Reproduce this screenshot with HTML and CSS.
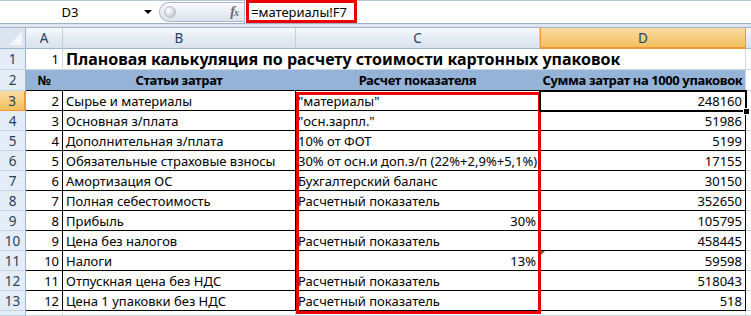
FILE: index.html
```html
<!DOCTYPE html>
<html lang="ru">
<head>
<meta charset="utf-8">
<title>Плановая калькуляция</title>
<link rel="stylesheet" href="styles.css">
</head>
<body>
<div class="app">
  <div class="fbar">
    <div class="namebox"><span class="nb-text">D3</span><span class="nb-arrow"></span></div>
    <div class="fx-zone">
      <div class="pill"><span class="knob"></span><span class="fx">f<span class="fx-x">x</span></span></div>
    </div>
    <div class="finput"><span class="ftext">=материалы!F7</span></div>
  </div>
  <div class="strip"></div>
  <div class="sheet">
    <div class="corner"><span class="corner-tri"></span></div>
    <div class="ch">A</div>
    <div class="ch">B</div>
    <div class="ch">C</div>
    <div class="ch ch-sel">D</div>
    <div class="ch ch-e"></div>

    <div class="rh">1</div>
    <div class="c num">1</div>
    <div class="c title span3">Плановая калькуляция по расчету стоимости картонных упаковок</div>
    <div class="c e"></div>

    <div class="rh">2</div>
    <div class="c hd">№</div>
    <div class="c hd">Статьи затрат</div>
    <div class="c hd">Расчет показателя</div>
    <div class="c hd hd-last">Сумма затрат на 1000 упаковок</div>
    <div class="c e"></div>

    <div class="rh rh-sel">3</div>
    <div class="c t num">2</div>
    <div class="c t">Сырье и материалы</div>
    <div class="c t cc">"материалы"</div>
    <div class="c t num">248160</div>
    <div class="c e"></div>

    <div class="rh">4</div>
    <div class="c t num">3</div>
    <div class="c t">Основная з/плата</div>
    <div class="c t cc">"осн.зарпл."</div>
    <div class="c t num">51986</div>
    <div class="c e"></div>

    <div class="rh">5</div>
    <div class="c t num">4</div>
    <div class="c t">Дополнительная з/плата</div>
    <div class="c t cc">10% от ФОТ</div>
    <div class="c t num">5199</div>
    <div class="c e"></div>

    <div class="rh">6</div>
    <div class="c t num">5</div>
    <div class="c t">Обязательные страховые взносы</div>
    <div class="c t cc">30% от осн.и доп.з/п (22%+2,9%+5,1%)</div>
    <div class="c t num">17155</div>
    <div class="c e"></div>

    <div class="rh">7</div>
    <div class="c t num">6</div>
    <div class="c t">Амортизация ОС</div>
    <div class="c t cc">Бухгалтерский баланс</div>
    <div class="c t num">30150</div>
    <div class="c e"></div>

    <div class="rh">8</div>
    <div class="c t num">7</div>
    <div class="c t">Полная себестоимость</div>
    <div class="c t cc">Расчетный показатель</div>
    <div class="c t num">352650</div>
    <div class="c e"></div>

    <div class="rh">9</div>
    <div class="c t num">8</div>
    <div class="c t">Прибыль</div>
    <div class="c t num">30%</div>
    <div class="c t num">105795</div>
    <div class="c e"></div>

    <div class="rh">10</div>
    <div class="c t num">9</div>
    <div class="c t">Цена без налогов</div>
    <div class="c t cc">Расчетный показатель</div>
    <div class="c t num">458445</div>
    <div class="c e"></div>

    <div class="rh">11</div>
    <div class="c t num">10</div>
    <div class="c t">Налоги</div>
    <div class="c t num">13%</div>
    <div class="c t num flag">59598</div>
    <div class="c e"></div>

    <div class="rh">12</div>
    <div class="c t num">11</div>
    <div class="c t">Отпускная цена без НДС</div>
    <div class="c t cc">Расчетный показатель</div>
    <div class="c t num">518043</div>
    <div class="c e"></div>

    <div class="rh">13</div>
    <div class="c t num">12</div>
    <div class="c t">Цена 1 упаковки без НДС</div>
    <div class="c t cc">Расчетный показатель</div>
    <div class="c t num">518</div>
    <div class="c e"></div>

    <div class="rh"></div>
    <div class="c"></div>
    <div class="c"></div>
    <div class="c"></div>
    <div class="c"></div>
    <div class="c e"></div>

    <div class="hl-box"></div>
    <div class="sel-box"><span class="handle"></span></div>
  </div>
</div>
</body>
</html>
```

FILE: styles.css
```css
* { box-sizing: border-box; }
html, body { margin: 0; padding: 0; background: #ffffff; }
body {
  font-family: "Noto Sans", "Open Sans", sans-serif;
  font-size: 13px;
  color: #000;
  width: 751px;
  height: 316px;
  overflow: hidden;
}
.app { width: 751px; height: 316px; display: flex; flex-direction: column; overflow: hidden; }

/* formula bar */
.fbar {
  height: 24px;
  display: flex;
  border-top: 1px solid #b6c5d8;
  border-bottom: 1px solid #9fb1c8;
  background: #ffffff;
}
.namebox {
  width: 156px;
  display: flex;
  align-items: center;
  background: #fff;
}
.nb-text { width: 140px; text-align: center; font-size: 13px; color: #000; }
.nb-arrow {
  width: 0; height: 0;
  border-left: 4px solid transparent;
  border-right: 4px solid transparent;
  border-top: 4px solid #000;
  margin-left: 4px;
}
.fx-zone {
  width: 88px;
  display: flex;
  align-items: center;
  background: #ffffff;
}
.pill {
  margin-left: 3px;
  width: 85px;
  height: 20px;
  border: 1px solid #a7b6c9;
  border-right: none;
  border-radius: 10px 0 0 10px;
  background: linear-gradient(to bottom, #fafbfd 0%, #e9edf3 55%, #dde3eb 100%);
  display: flex;
  align-items: center;
  justify-content: space-between;
  padding: 0 6px 0 4px;
}
.knob {
  width: 12px; height: 12px;
  border-radius: 50%;
  background: radial-gradient(circle at 35% 35%, #ffffff 0%, #d6dbe2 55%, #a9b1bc 100%);
  border: 1px solid #b8c0cb;
}
.fx {
  font-family: "Liberation Serif", "DejaVu Serif", serif;
  font-style: italic;
  font-weight: bold;
  font-size: 14px;
  color: #6b6b6b;
  letter-spacing: -1px;
}
.fx-x { font-size: 10px; }
.finput {
  flex: 1;
  border-left: 1px solid #a7b6c9;
  display: flex;
  align-items: stretch;
  padding-left: 1px;
}
.ftext {
  display: inline-flex;
  align-items: center;
  border: 3px solid #ec0000;
  padding: 0 7px 0 2px;
  margin-top: -1px;
  font-size: 13px;
  color: #000;
}
.strip {
  height: 4px;
  background: #dfe6ef;
  border-bottom: 1px solid #a4b5ca;
}

/* sheet */
.sheet {
  position: relative;
  flex: 1;
  display: grid;
  grid-template-columns: 26px 37px 233px 244px 206px 1fr;
  grid-template-rows: 21px 21px 21px repeat(11, 20px) 1fr;
}
.corner {
  background: #dbe4ef;
  border-right: 1px solid #9eb6ce;
  border-bottom: 1px solid #9eb6ce;
  position: relative;
}
.corner-tri {
  position: absolute;
  right: 3px; bottom: 3px;
  width: 0; height: 0;
  border-left: 13px solid transparent;
  border-bottom: 13px solid #f2f5f9;
}
.ch {
  background: linear-gradient(to bottom, #f7f9fc 0%, #e6ecf4 50%, #d9e2ed 100%);
  border-right: 1px solid #c2cfdf;
  border-bottom: 1px solid #9eb6ce;
  display: flex;
  align-items: center;
  justify-content: center;
  color: #27415f;
  font-size: 13.5px;
}
.ch-sel {
  background: linear-gradient(to bottom, #f9dca4 0%, #f5cd7f 50%, #f1c15f 100%);
  border-left: 1px solid #f29536;
  border-right: 1px solid #f29536;
  border-bottom: 2px solid #f29536;
  color: #27415f;
}
.ch-e { border-right: none; }
.rh {
  background: #e4ecf7;
  border-right: 1px solid #9eb6ce;
  border-bottom: 1px solid #c5d3e4;
  display: flex;
  align-items: center;
  justify-content: center;
  color: #27415f;
  font-size: 13.5px;
}
.rh-sel {
  background: linear-gradient(to bottom, #f9dca4 0%, #f5cd7f 50%, #f1c15f 100%);
  border-right: 2px solid #f29536;
  border-bottom: 1px solid #f29536;
}
.c {
  border-right: 1px solid #d0d7e5;
  border-bottom: 1px solid #d0d7e5;
  display: flex;
  align-items: center;
  padding: 0 3px;
  white-space: nowrap;
  overflow: visible;
  position: relative;
}
.cc { padding-left: 2px; }
.num { justify-content: flex-end; }
.title {
  font-weight: bold;
  font-size: 16px;
  padding-left: 3px;
  letter-spacing: 0;
}
.span3 { grid-column: span 3; }
.hd {
  background: #95b3d7;
  border-right-color: #95b3d7;
  border-bottom-color: #000;
  font-weight: bold;
  justify-content: center;
  letter-spacing: -0.4px;
}
.hd-last { border-right-color: #d0d7e5; }
.t {
  border-right-color: #000;
  border-bottom-color: #000;
}
.e { border-right: none; }
.flag::before {
  content: "";
  position: absolute;
  left: 0; top: 0;
  width: 0; height: 0;
  border-top: 5px solid #1d8a22;
  border-right: 5px solid transparent;
}

/* overlays */
.hl-box {
  position: absolute;
  left: 296px;
  top: 64px;
  width: 245px;
  height: 222px;
  border: 3px solid #ec0000;
  pointer-events: none;
}
.sel-box {
  position: absolute;
  left: 539px;
  top: 62px;
  width: 208px;
  height: 22px;
  border: 2px solid #000;
  pointer-events: none;
}
.handle {
  position: absolute;
  right: -5px;
  bottom: -5px;
  width: 7px;
  height: 7px;
  background: #000;
  border: 1px solid #fff;
}
```
